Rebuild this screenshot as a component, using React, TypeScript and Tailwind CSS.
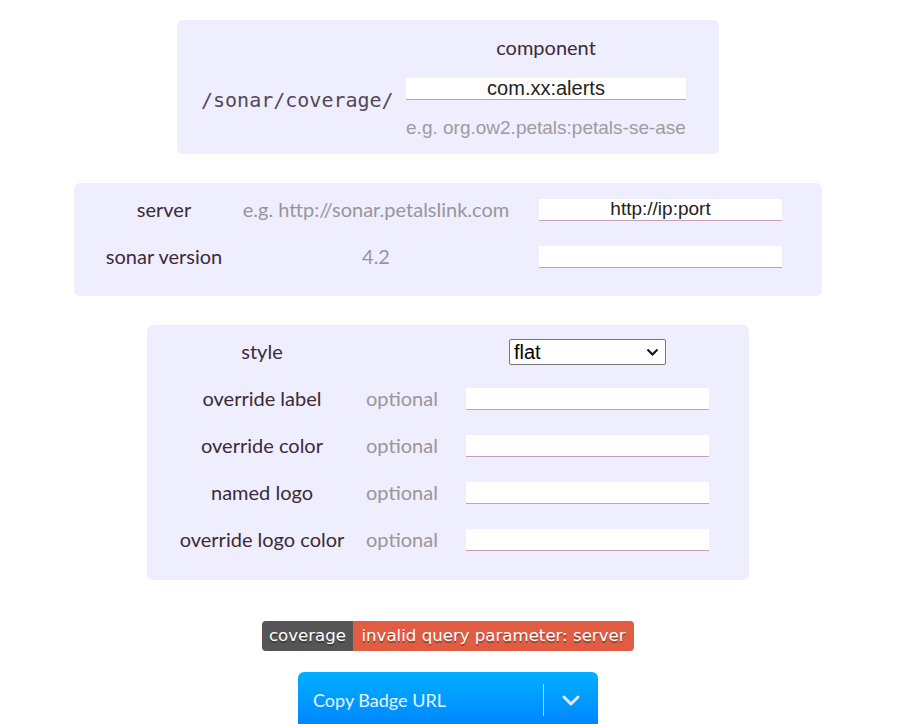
import React from "react";

const label = "font-['Lato','Noto_Sans',sans-serif] text-[20px] text-[#3d2a36]";
const hint = "font-['Lato','Noto_Sans',sans-serif] text-[20px] text-[#9b9498]";
const inputCls =
  "block h-[22px] bg-white border-b border-[#c4a0b6] font-['Liberation_Sans',Arial,sans-serif] text-[19px] text-[#222] text-center leading-[21px] outline-none";

function Field({ value = "" }: { value?: string }) {
  return <input className={`${inputCls} w-[243px]`} defaultValue={value} />;
}

export default function App() {
  return (
    <div className="w-[896px] bg-white flex flex-col items-center pt-[20px] pb-[20px]">
      {/* Panel 1 */}
      <div className="w-[542px] rounded-[6px] bg-[#eeeeff] flex items-start pl-[24px] pr-[33px] pt-[16px] pb-[14px]">
        <div className="w-[192px] mt-[52px] leading-[24px] font-['DejaVu_Sans_Mono',monospace] text-[20px] text-[#55465a] whitespace-nowrap">
          /sonar/coverage/
        </div>
        <div className="ml-[13px] w-[280px] flex flex-col items-center">
          <div className={`${label} leading-[24px] -mt-[1px] mb-[1px]`}>component</div>
          <input className={`${inputCls} w-[280px] mt-[18px] text-[20px]`} defaultValue="com.xx:alerts" />
          <div className="mt-[16px] leading-[24px] font-['Liberation_Sans',Arial,sans-serif] text-[19px] text-[#a09a9e] whitespace-nowrap">
            e.g. org.ow2.petals:petals-se-ase
          </div>
        </div>
      </div>

      {/* Panel 2 */}
      <div className="mt-[29px] w-[748px] rounded-[6px] bg-[#eeeeff] pt-[3px] pb-[16px] pl-[16px]">
        <div className="flex items-center h-[47px]">
          <div className={`${label} w-[148px] text-center -mt-[2px]`}>server</div>
          <div className={`${hint} w-[276px] text-center whitespace-nowrap -mt-[2px]`}>e.g. http://sonar.petalslink.com</div>
          <div className="ml-[25px]">
            <Field value="http://ip:port" />
          </div>
        </div>
        <div className="flex items-center h-[47px]">
          <div className={`${label} w-[148px] text-center whitespace-nowrap -mt-[2px]`}>sonar version</div>
          <div className={`${hint} w-[276px] text-center -mt-[2px]`}>4.2</div>
          <div className="ml-[25px]">
            <Field />
          </div>
        </div>
      </div>

      {/* Panel 3 */}
      <div className="mt-[29px] w-[602px] rounded-[6px] bg-[#eeeeff] pt-[3px] pb-[17px] pl-[24px]">
        <div className="flex items-center h-[47px]">
          <div className={`${label} w-[182px] text-center -mt-[2px]`}>style</div>
          <div className="w-[113px]" />
          <div className="w-[243px] flex justify-center">
            <div className="relative w-[157px] h-[26px] bg-white border border-[#767676] rounded-[2px] flex items-center pl-[4px]">
              <span className="font-['Liberation_Sans',Arial,sans-serif] text-[20px] text-black leading-none">flat</span>
              <svg className="absolute right-[6px] top-[8px]" width="13" height="9" viewBox="0 0 13 9">
                <path d="M1.5 1.5 L6.5 6.5 L11.5 1.5" fill="none" stroke="#111" strokeWidth="2" />
              </svg>
            </div>
          </div>
        </div>
        {["override label", "override color", "named logo", "override logo color"].map((t) => (
          <div key={t} className="flex items-center h-[47px]">
            <div className={`${label} w-[182px] text-center whitespace-nowrap -mt-[2px]`}>{t}</div>
            <div className={`${hint} w-[113px] pl-[13px] whitespace-nowrap -mt-[2px]`}>optional</div>
            <div>
              <Field />
            </div>
          </div>
        ))}
      </div>

      {/* Badge */}
      <div className="mt-[41px] flex h-[30px] rounded-[4px] overflow-hidden font-['DejaVu_Sans',Verdana,sans-serif] text-[16.6px] text-white [text-shadow:0_1.5px_0_rgba(1,1,1,0.35)]">
        <div className="w-[91px] bg-[#555555] flex items-center justify-center whitespace-nowrap">coverage</div>
        <div className="w-[281px] bg-[#e05d44] flex items-center justify-center whitespace-nowrap">
          invalid query parameter: server
        </div>
      </div>

      {/* Button */}
      <div className="mt-[21px] w-[300px] h-[60px] rounded-t-[6px] bg-gradient-to-b from-[#00b0ff] to-[#0080ff] flex items-start pt-[12px]">
        <div className="flex-1 h-[32px] flex items-center pl-[15px] font-['Lato','Noto_Sans',sans-serif] text-[18px] text-white/90">
          Copy Badge URL
        </div>
        <div className="w-px h-[32px] bg-[#e8dcc8]/80" />
        <div className="w-[54px] h-[32px] flex items-center justify-center">
          <svg width="18" height="11" viewBox="0 0 18 11">
            <path d="M2 2 L9 9 L16 2" fill="none" stroke="#dfe6ee" strokeWidth="3" strokeLinecap="round" strokeLinejoin="round" />
          </svg>
        </div>
      </div>
    </div>
  );
}
